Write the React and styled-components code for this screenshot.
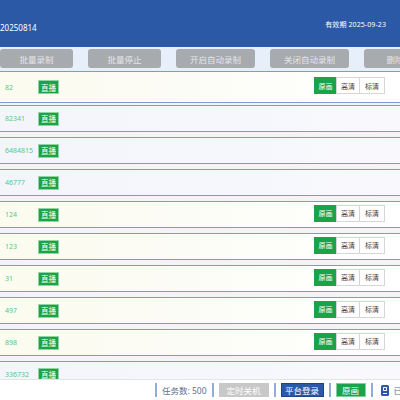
import React from 'react'
import styled, { createGlobalStyle } from 'styled-components'

const GlobalStyle = createGlobalStyle`
    html, body {
        margin: 0;
        padding: 0;
        overflow: hidden;
        background: #ffffff;
    }
    * { box-sizing: border-box; }
`

const AppStyled = styled.div`
    width: 400px;
    height: 400px;
    display: flex;
    flex-direction: column;
    overflow: hidden;
    font-family: "Noto Sans", "Noto Sans CJK SC", sans-serif;
`

const Header = styled.header`
    height: 47px;
    flex: none;
    background: #2b59a6;
    color: #ffffff;
    display: flex;
    align-items: center;
    justify-content: space-between;
    padding-right: 14px;

    .version{
        font-size: 8px;
        margin-top: 7px;
    }
    .expire{
        font-size: 7px;
        letter-spacing: 0.1px;
    }
`

const Toolbar = styled.div`
    height: 24px;
    flex: none;
    background: #e6effa;
    display: flex;
    align-items: flex-start;
    padding-top: 2px;
    gap: 15px;
    overflow: hidden;
    white-space: nowrap;
`

const ToolButton = styled.button`
    flex: none;
    width: ${p => p.$w}px;
    height: 19px;
    border: none;
    border-radius: 3px;
    background: #a7aaae;
    color: #e4e6e8;
    font-family: inherit;
    font-size: 8.5px;
    padding: 0;
`

const List = styled.div`
    flex: 1;
    overflow: hidden;
    display: flex;
    flex-direction: column;
    gap: 5px;
    background: #f3f4f6;
`

const Row = styled.div`
    flex: none;
    height: 27px;
    border-top: 1px solid #7d9ad2;
    border-bottom: 1px solid #7d9ad2;
    display: flex;
    align-items: center;
    padding: 0 15px 0 5px;
    background: ${p => p.$live
        ? 'linear-gradient(90deg, #fbfbef 0%, #fcfcf6 45%, #ffffff 100%)'
        : 'linear-gradient(90deg, #f4f5fb 0%, #f6f7fc 60%, #f9f9fd 100%)'};

    &:first-child{
        height: 32px;
        margin-bottom: -3px;
    }
`

const RoomId = styled.span`
    width: 33px;
    font-size: 7px;
    color: #5cc67c;
    white-space: nowrap;
`

const LiveBadge = styled.span`
    display: inline-flex;
    align-items: center;
    justify-content: center;
    height: 14px;
    padding: 0 2px;
    background: #1ba24a;
    border: 1px solid #8fd6a6;
    color: #ffffff;
    font-size: 7.5px;
`

const Quality = styled.div`
    margin-left: auto;
    display: flex;
    margin-top: -3px;
`

const QualityButton = styled.span`
    width: ${p => p.$w}px;
    height: 17px;
    display: flex;
    align-items: center;
    justify-content: center;
    font-size: 7px;
    border: 1px solid ${p => p.$active ? '#1ba24a' : '#d6d6d6'};
    margin-left: -1px;
    background: ${p => p.$active ? '#1ba24a' : '#ffffff'};
    color: ${p => p.$active ? '#ffffff' : '#444444'};
`

const Footer = styled.footer`
    height: 21px;
    flex: none;
    background: #ffffff;
    border-top: 1px solid #e2e4e8;
    display: flex;
    align-items: center;
    gap: 5px;
    padding-left: 155px;
    white-space: nowrap;
    overflow: hidden;
`

const Divider = styled.span`
    flex: none;
    width: 2px;
    height: 14px;
    background: #92acd9;
`

const FooterText = styled.span`
    font-size: 8.5px;
    color: #5b6f8e;
`

const FooterButton = styled.span`
    flex: none;
    width: ${p => p.$w}px;
    height: 14px;
    display: flex;
    align-items: center;
    justify-content: center;
    font-size: 8.5px;
    color: #ffffff;
    background: ${p => p.$bg};
    border: 1px solid ${p => p.$border};
`

const rows = [
    { id: '82', live: true },
    { id: '82341' },
    { id: '6484815' },
    { id: '46777' },
    { id: '124', live: true },
    { id: '123', live: true },
    { id: '31', live: true },
    { id: '497', live: true },
    { id: '898', live: true },
    { id: '336732' },
]

function DiskIcon() {
    return (
        <svg width="8" height="11" viewBox="0 0 8 11" style={{ flex: 'none', marginLeft: 3 }}>
            <rect x="0" y="0" width="8" height="11" rx="1.5" fill="#2b59a6" />
            <rect x="2" y="2" width="4" height="4" rx="0.8" fill="#ffffff" />
            <rect x="3" y="3" width="2" height="2" fill="#2b59a6" />
            <rect x="2" y="8" width="4" height="1" fill="#ffffff" />
        </svg>
    )
}

function App() {
    return (
        <AppStyled>
            <GlobalStyle />
            <Header>
                <span className="version">20250814</span>
                <span className="expire">有效期 2025-09-23</span>
            </Header>
            <Toolbar>
                <ToolButton $w={73}>批量录制</ToolButton>
                <ToolButton $w={73}>批量停止</ToolButton>
                <ToolButton $w={79}>开启自动录制</ToolButton>
                <ToolButton $w={79}>关闭自动录制</ToolButton>
                <ToolButton $w={79}>删除选中</ToolButton>
            </Toolbar>
            <List>
                {rows.map(r => (
                    <Row key={r.id} $live={r.live}>
                        <RoomId>{r.id}</RoomId>
                        <LiveBadge>直播</LiveBadge>
                        {r.live && (
                            <Quality>
                                <QualityButton $w={23} $active>原画</QualityButton>
                                <QualityButton $w={24}>高清</QualityButton>
                                <QualityButton $w={26}>标清</QualityButton>
                            </Quality>
                        )}
                    </Row>
                ))}
            </List>
            <Footer>
                <Divider />
                <FooterText>任务数: 500</FooterText>
                <Divider />
                <FooterButton $w={50} $bg="#c8c8c8" $border="#c8c8c8">定时关机</FooterButton>
                <Divider />
                <FooterButton $w={43} $bg="#2b59a6" $border="#1d4488">平台登录</FooterButton>
                <Divider />
                <FooterButton $w={30} $bg="#1ba24a" $border="#7fd09a">原画</FooterButton>
                <Divider />
                <DiskIcon />
                <FooterText>已用空间: 120.5GB</FooterText>
            </Footer>
        </AppStyled>
    )
}

export default App
